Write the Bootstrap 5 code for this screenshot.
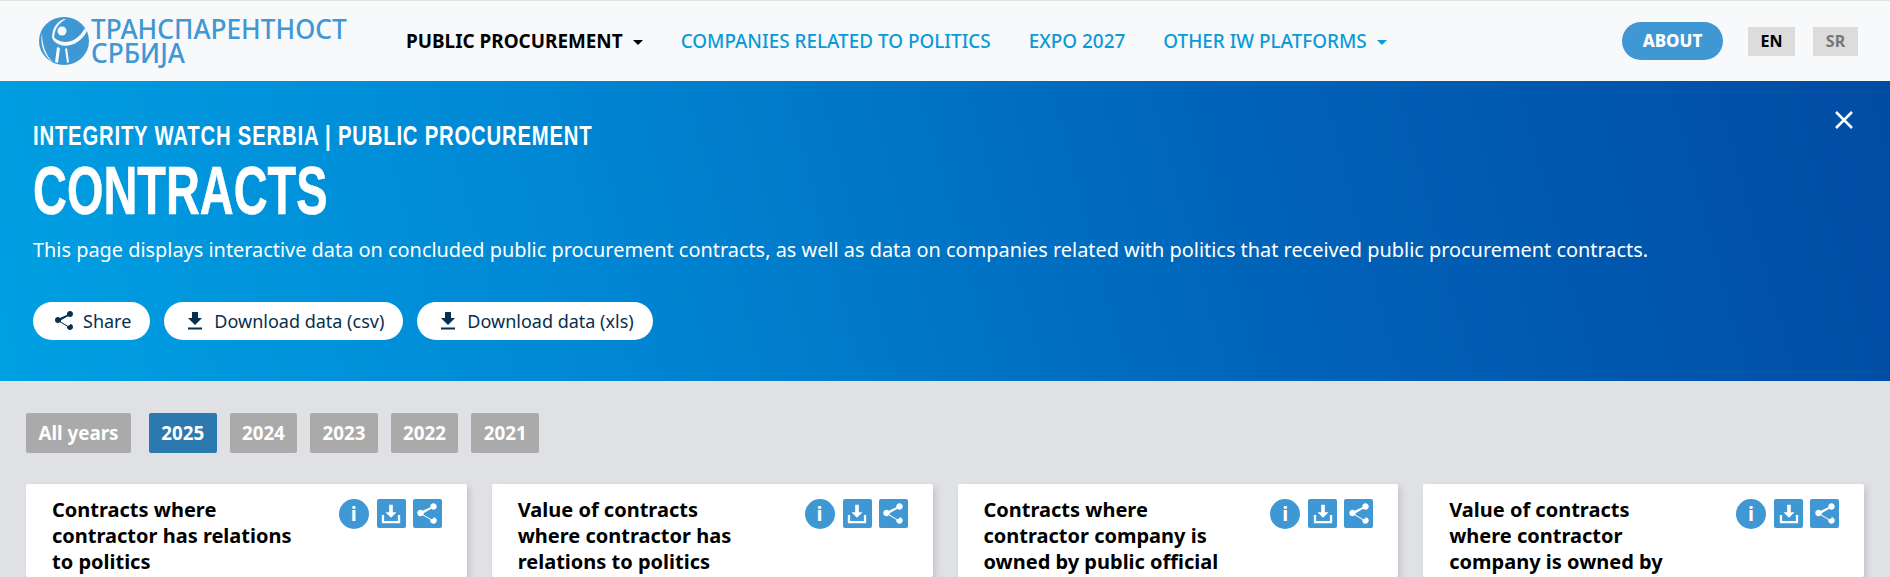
<!DOCTYPE html>
<html lang="en">
<head>
  <meta charset="UTF-8" />
  <title>Contracts</title>
  <link href="https://cdn.jsdelivr.net/npm/bootstrap@5.3.0/dist/css/bootstrap.min.css" rel="stylesheet">
  <style>
    html, body { height: 577px; overflow: hidden; }
    body { background: #e0e1e5; font-family: "Noto Sans", sans-serif; border-top: 1px solid #e2e3df; }
    .top-bar { height: 80px; background: #f8f9fa; padding: 0 32px 0 39px; }
    .brand-box { width: 310px; color: #3f97d3; }
    .brand-text { font-size: 26.2px; font-weight: 500; line-height: 24px; margin-left: 2px; white-space: nowrap; }
    .main-links { margin-left: 57px; gap: 38px; }
    .main-links a { color: #0a9ad9; font-size: 18.9px; font-weight: 500; text-decoration: none; }
    .main-links a.active-link { color: #000; font-weight: 700; }
    .caret-mark { display: inline-block; width: 0; height: 0; margin-left: 10px; vertical-align: 3px; border-top: 5px solid currentColor; border-left: 5px solid transparent; border-right: 5px solid transparent; }
    .about-btn { background: #3f97d3; color: #fff; font-weight: 800; font-size: 17px; border-radius: 19px; width: 101px; height: 38px; margin-right: 25px; border: 0; padding: 0; }
    .lang-btn { background: #dcdcdc; font-weight: 700; font-size: 16px; height: 29px; border: 0; border-radius: 0; padding: 0; }
    .lang-en { width: 47px; color: #000; margin-right: 18px; }
    .lang-sr { width: 45px; color: #777; }
    .hero-box { height: 300px; background: linear-gradient(75deg, #00a0e3 0%, #0088d4 30%, #0064b9 65%, #004ca3 100%); color: #fff; padding: 39px 33px 0; position: relative; }
    .hero-sub, .hero-title { font-family: "Liberation Sans", sans-serif; font-weight: 700; transform-origin: left center; white-space: nowrap; margin: 0; }
    .hero-sub { font-size: 28px; letter-spacing: 1.1px; line-height: 32px; transform: scaleX(.725); }
    .hero-title { font-size: 69px; line-height: 77px; transform: scaleX(.68); -webkit-text-stroke: .6px #fff; }
    .hero-text { font-size: 19.9px; line-height: 27px; margin: 7px 0 0; }
    .hero-btns { margin-top: 39px; gap: 14px; }
    .pill-btn { background: #fff; color: #06304f; border: 0; border-radius: 19px; height: 38px; padding: 0 19px; font-size: 18px; gap: 7px; white-space: nowrap; }
    .close-x { position: absolute; right: 36px; top: 29px; width: 20px; height: 20px; }
    .year-row { padding: 32px 26px 0; gap: 13px; }
    .year-btn { background: #aaa; color: #fff; font-weight: 700; font-size: 18.8px; height: 40px; width: 67.6px; border: 0; border-radius: 2px; padding: 0; flex: 0 0 auto; white-space: nowrap; }
    .year-btn.w-all { width: 105px; margin-right: 5px; }
    .year-btn.on { background: #2b79ae; }
    .card-row { padding: 31px 26px 0; gap: 25px; }
    .tile { flex: 1 1 0; background: #fff; border-radius: 2px; height: 93px; overflow: hidden; padding: 13px 25px 0 26px; box-shadow: 3px 3px 6px rgba(0,0,0,.12); }
    .tile h3 { width: 245px; font-size: 20px; font-weight: 700; line-height: 26px; margin: 0; color: #000; }
    .tile-tools { gap: 7px; padding-top: 2px; }
    .tool-square { width: 29px; height: 29px; background: #3f97d3; border-radius: 2px; }
    .tool-round { width: 30px; height: 30px; background: #3f97d3; border-radius: 50%; color: #fff; font-weight: 700; font-size: 20px; line-height: 30px; text-align: center; margin-right: 1px; }
  </style>
</head>
<body>
  <svg width="0" height="0" class="position-absolute">
    <symbol id="ico-share" viewBox="0 0 24 24"><path d="M18 16.100c-.8 0-1.400.3-2 .8l-7.100-4.200c.1-.2.1-.5.1-.7s0-.5-.1-.7L16 7.200c.5.5 1.200.8 2 .8 1.700 0 3-1.300 3-3s-1.300-3-3-3-3 1.300-3 3c0 .2 0 .5.1.7L8 8.900C7.500 8.400 6.800 8 6 8c-1.700 0-3 1.300-3 3s1.300 3 3 3c.8 0 1.500-.3 2-.8l7.100 4.200c-.1.200-.1.400-.1.600 0 1.600 1.300 2.900 3 2.900s3-1.300 3-2.900-1.300-2.900-3-2.900z" fill="currentColor"/></symbol>
    <symbol id="ico-down" viewBox="0 0 24 24"><path d="M19 9h-4V3H9v6H5l7 7zM5 18.500v2h14v-2z" fill="currentColor"/></symbol>
    <symbol id="ico-tray" viewBox="0 0 24 24"><path d="M10 2h4v8h4l-6 6-6-6h4zM2 13h2.500v6.500h15V13H22v9H2z" fill="currentColor"/></symbol>
  </svg>

  <nav class="top-bar d-flex align-items-center">
    <div class="brand-box d-flex align-items-center">
      <svg width="50" height="48" viewBox="0 0 50 48" class="flex-shrink-0">
        <ellipse cx="25" cy="24" rx="25" ry="24" fill="#3f97d3"/>
        <circle cx="23" cy="14" r="4.500" fill="#f8f9fa"/>
        <path d="M14 19C20 27 36 29 46 11l2 3C40 30 22 33 14 23z" fill="#f8f9fa"/>
        <path d="M25 2C17 5 13 12 13 21l2 2C15 14 18 7 27 2z" fill="#f8f9fa"/>
        <path d="M18 30l-2 15 3 1 2-15zM26 32l2 14 2-1-2-14z" fill="#f8f9fa"/>
        <path d="M3 16c0 12 4 23 11 29l-2-1C4 37 1 26 3 16z" fill="#f8f9fa"/>
      </svg>
      <div class="brand-text">ТРАНСПАРЕНТНОСТ<br>СРБИЈА</div>
    </div>
    <div class="main-links d-flex align-items-center flex-grow-1">
      <a href="#" class="active-link">PUBLIC PROCUREMENT<span class="caret-mark"></span></a>
      <a href="#">COMPANIES RELATED TO POLITICS</a>
      <a href="#">EXPO 2027</a>
      <a href="#">OTHER IW PLATFORMS<span class="caret-mark"></span></a>
    </div>
    <button class="about-btn">ABOUT</button>
    <button class="lang-btn lang-en">EN</button>
    <button class="lang-btn lang-sr">SR</button>
  </nav>

  <header class="hero-box">
    <p class="hero-sub">INTEGRITY WATCH SERBIA | PUBLIC PROCUREMENT</p>
    <h1 class="hero-title">CONTRACTS</h1>
    <p class="hero-text">This page displays interactive data on concluded public procurement contracts, as well as data on companies related with politics that received public procurement contracts.</p>
    <div class="hero-btns d-flex">
      <button class="pill-btn d-flex align-items-center"><svg width="24" height="24"><use href="#ico-share"/></svg>Share</button>
      <button class="pill-btn d-flex align-items-center"><svg width="24" height="24"><use href="#ico-down"/></svg>Download data (csv)</button>
      <button class="pill-btn d-flex align-items-center"><svg width="24" height="24"><use href="#ico-down"/></svg>Download data (xls)</button>
    </div>
    <svg class="close-x" viewBox="0 0 20 20"><path d="M2 2l16 16M18 2L2 18" stroke="#fff" stroke-width="2.500" fill="none"/></svg>
  </header>

  <div class="year-row d-flex">
    <button class="year-btn w-all">All years</button>
    <button class="year-btn on">2025</button>
    <button class="year-btn">2024</button>
    <button class="year-btn">2023</button>
    <button class="year-btn">2022</button>
    <button class="year-btn">2021</button>
  </div>

  <div class="card-row d-flex">
    <div class="tile d-flex justify-content-between">
      <h3>Contracts where contractor has relations to politics</h3>
      <div class="tile-tools d-flex align-items-start">
        <div class="tool-round">i</div>
        <div class="tool-square text-white d-flex align-items-center justify-content-center"><svg width="22" height="22"><use href="#ico-tray"/></svg></div>
        <div class="tool-square text-white d-flex align-items-center justify-content-center"><svg width="26" height="26"><use href="#ico-share"/></svg></div>
      </div>
    </div>
    <div class="tile d-flex justify-content-between">
      <h3>Value of contracts where contractor has relations to politics</h3>
      <div class="tile-tools d-flex align-items-start">
        <div class="tool-round">i</div>
        <div class="tool-square text-white d-flex align-items-center justify-content-center"><svg width="22" height="22"><use href="#ico-tray"/></svg></div>
        <div class="tool-square text-white d-flex align-items-center justify-content-center"><svg width="26" height="26"><use href="#ico-share"/></svg></div>
      </div>
    </div>
    <div class="tile d-flex justify-content-between">
      <h3>Contracts where contractor company is owned by public official</h3>
      <div class="tile-tools d-flex align-items-start">
        <div class="tool-round">i</div>
        <div class="tool-square text-white d-flex align-items-center justify-content-center"><svg width="22" height="22"><use href="#ico-tray"/></svg></div>
        <div class="tool-square text-white d-flex align-items-center justify-content-center"><svg width="26" height="26"><use href="#ico-share"/></svg></div>
      </div>
    </div>
    <div class="tile d-flex justify-content-between">
      <h3>Value of contracts where contractor company is owned by</h3>
      <div class="tile-tools d-flex align-items-start">
        <div class="tool-round">i</div>
        <div class="tool-square text-white d-flex align-items-center justify-content-center"><svg width="22" height="22"><use href="#ico-tray"/></svg></div>
        <div class="tool-square text-white d-flex align-items-center justify-content-center"><svg width="26" height="26"><use href="#ico-share"/></svg></div>
      </div>
    </div>
  </div>

  <script src="https://cdn.jsdelivr.net/npm/bootstrap@5.3.0/dist/js/bootstrap.bundle.min.js"></script>
</body>
</html>
